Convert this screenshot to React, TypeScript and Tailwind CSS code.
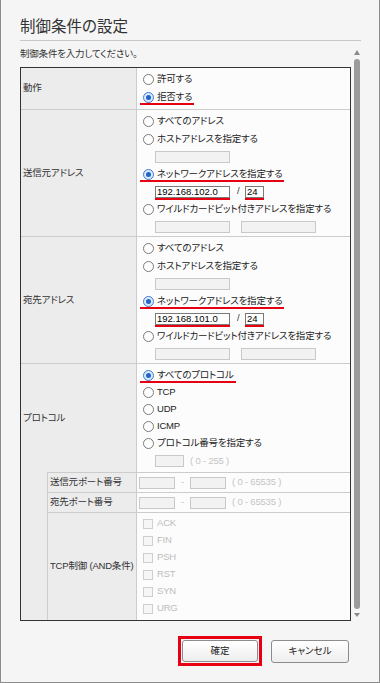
import React from "react";

type RadioProps = { label: string; checked?: boolean; mark?: boolean; h?: string };

const Radio: React.FC<RadioProps> = ({ label, checked, mark, h = "h-[18px]" }) => (
    <div className={`flex items-center ${h}`}>
        <div className="relative flex h-full items-center pl-[6px] pr-[2px]">
            {checked ? (
                <span className="flex h-[11px] w-[11px] items-center justify-center rounded-full border border-[#3d7bd1] bg-[#dbe9fb]">
                    <span className="h-[5px] w-[5px] rounded-full bg-[#1f64c8]" />
                </span>
            ) : (
                <span className="h-[11px] w-[11px] rounded-full border border-[#7a7a7a] bg-white" />
            )}
            <span className="ml-[3px] text-[#222]">{label}</span>
            {mark && (
                <span className="absolute bottom-[1px] left-[3px] right-0 h-[2px] bg-[#e60012]" />
            )}
        </div>
    </div>
);

type BoxProps = { value?: string; active?: boolean; mark?: boolean; cls: string };

const Box: React.FC<BoxProps> = ({ value, active, mark, cls }) => (
    <span className={`relative flex h-[12px] items-center ${cls}`}>
        <span
            className={`flex h-full w-full items-center px-[1px] leading-none tracking-normal ${
                active
                    ? "border border-[#7a7a7a] bg-white text-black"
                    : "border border-[#c9c9c9] bg-[#f2f2f2]"
            }`}
        >
            {value}
        </span>
        {mark && <span className="absolute -bottom-[2px] left-0 right-0 h-[2px] bg-[#e60012]" />}
    </span>
);

const Check: React.FC<{ label: string }> = ({ label }) => (
    <div className="flex h-[17px] items-center pl-[6px]">
        <span className="h-[10px] w-[10px] border border-[#cfcfcf] bg-[#f6f6f6]" />
        <span className="ml-[4px] text-[#bdbdbd]">{label}</span>
    </div>
);

const Row: React.FC<{ label: string; first?: boolean; children: React.ReactNode; pad: string }> = ({
    label,
    first,
    children,
    pad,
}) => (
    <div className={`flex ${first ? "" : "border-t border-[#cccccc]"}`}>
        <div className="flex w-[116px] shrink-0 items-center border-r border-[#cccccc] bg-[#ececec] pl-[2px] text-[#333]">
            {label}
        </div>
        <div className={`flex-1 bg-[#fcfcfc] ${pad}`}>{children}</div>
    </div>
);

const AddressBlock: React.FC<{ net: string }> = ({ net }) => (
    <>
        <Radio label="すべてのアドレス" />
        <Radio label="ホストアドレスを指定する" />
        <div className="flex h-[17px] items-center pl-[18px]">
            <Box cls="w-[75px]" />
        </div>
        <Radio label="ネットワークアドレスを指定する" checked mark />
        <div className="flex h-[17px] items-center pl-[18px]">
            <Box cls="w-[75px]" value={net} active mark />
            <span className="ml-[7px] w-[8px] text-[#333]">/</span>
            <Box cls="w-[19px]" value="24" active mark />
        </div>
        <Radio label="ワイルドカードビット付きアドレスを指定する" />
        <div className="flex h-[18px] items-center gap-[11px] pl-[18px]">
            <Box cls="w-[75px]" />
            <Box cls="w-[75px]" />
        </div>
    </>
);

const PortRow: React.FC<{ label: string }> = ({ label }) => (
    <div className="flex h-[20px] border-t border-[#cccccc]">
        <div className="flex w-[89px] shrink-0 items-center border-r border-[#cccccc] bg-[#ececec] pl-[2px] text-[#333]">
            {label}
        </div>
        <div className="flex flex-1 items-center bg-[#fcfcfc] pl-[2px] text-[#c4c4c4]">
            <Box cls="w-[36px]" />
            <span className="w-[15px] text-center">-</span>
            <Box cls="w-[36px]" />
            <span className="ml-[6px]">( 0 - 65535 )</span>
        </div>
    </div>
);

export default function App() {
    return (
        <div className="h-[683px] w-[380px] border-x border-b border-[#8c8c8c] bg-[#f5f5f5] font-['Liberation_Sans','Noto_Sans_CJK_JP',sans-serif] text-[9.5px] tracking-[-0.2px] [font-feature-settings:'palt']">
            <div className="pl-[19px]">
                <div className="w-[341px] border-b border-[#c8c8c8] pb-[3px] pt-[16px] text-[15.5px] leading-[21px] tracking-normal text-[#333]">
                    制御条件の設定
                </div>

                <div className="flex">
                    <div className="w-[331px]">
                        <div className="mb-[6px] mt-[6px] flex h-[14px] items-center text-[9.5px] text-[#333]">
                            制御条件を入力してください。
                        </div>

                        <div className="border border-[#333]">
                            <Row label="動作" first pad="pt-[2px] pb-[3px]">
                                <Radio label="許可する" />
                                <Radio label="拒否する" checked mark />
                            </Row>

                            <Row label="送信元アドレス" pad="pt-[2px]">
                                <AddressBlock net="192.168.102.0" />
                            </Row>

                            <Row label="宛先アドレス" pad="pt-[2px]">
                                <AddressBlock net="192.168.101.0" />
                            </Row>

                            <Row label="プロトコル" pad="pt-[2px] pb-[2px]">
                                <Radio label="すべてのプロトコル" checked mark />
                                <Radio label="TCP" h="h-[17px]" />
                                <Radio label="UDP" h="h-[17px]" />
                                <Radio label="ICMP" h="h-[17px]" />
                                <Radio label="プロトコル番号を指定する" h="h-[17px]" />
                                <div className="flex h-[18px] items-center pl-[18px] text-[#c4c4c4]">
                                    <Box cls="w-[29px]" />
                                    <span className="ml-[6px]">( 0 - 255 )</span>
                                </div>
                            </Row>

                            <div className="flex">
                                <div className="w-[26px] shrink-0 bg-[#ececec]" />
                                <div className="flex-1 border-l border-[#cccccc]">
                                    <PortRow label="送信元ポート番号" />
                                    <PortRow label="宛先ポート番号" />
                                    <div className="flex border-t border-[#cccccc]">
                                        <div className="flex w-[89px] shrink-0 items-center whitespace-nowrap border-r border-[#cccccc] bg-[#ececec] pl-[2px] text-[#333]">
                                            TCP制御 (AND条件)
                                        </div>
                                        <div className="flex-1 bg-[#fcfcfc] pb-[3px] pt-[2px]">
                                            <Check label="ACK" />
                                            <Check label="FIN" />
                                            <Check label="PSH" />
                                            <Check label="RST" />
                                            <Check label="SYN" />
                                            <Check label="URG" />
                                        </div>
                                    </div>
                                </div>
                            </div>
                        </div>
                    </div>

                    {/* scrollbar */}
                    <div className="ml-[2px] flex w-[8px] flex-col items-center pb-[4px] pt-[9px]">
                        <span className="h-0 w-0 border-x-[3px] border-b-[5px] border-x-transparent border-b-[#8a8a8a]" />
                        <span className="mt-[4px] w-[6px] flex-1 rounded-full bg-[#9b9b9b]" />
                        <span className="mt-[4px] h-0 w-0 border-x-[3px] border-t-[4px] border-x-transparent border-t-[#8a8a8a]" />
                    </div>
                </div>

                <div className="mt-[15px] flex w-[329px] items-center justify-end gap-[9px] tracking-normal">
                    <div className="border-[3px] border-[#e60012] p-[1px]">
                        <button className="flex h-[22px] w-[76px] items-center justify-center rounded-[3px] border border-[#8c8c8c] bg-gradient-to-b from-white to-[#eeeeee] text-[#222]">
                            確定
                        </button>
                    </div>
                    <button className="flex h-[23px] w-[78px] items-center justify-center rounded-[3px] border border-[#8c8c8c] bg-gradient-to-b from-white to-[#eeeeee] text-[#222]">
                        キャンセル
                    </button>
                </div>
            </div>
        </div>
    );
}
